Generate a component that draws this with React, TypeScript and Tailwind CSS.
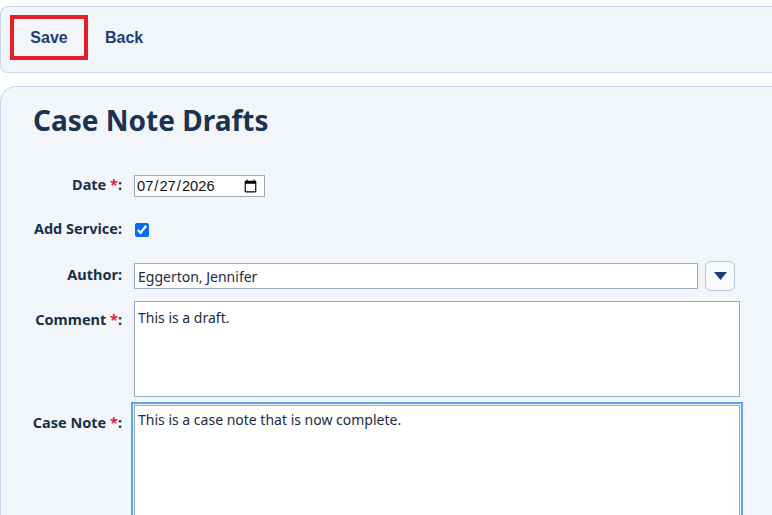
import { ChangeEvent, useState } from 'react';

const labelCls =
  "w-[121px] shrink-0 text-right text-[14.5px] font-bold text-[#1b2f4a]";
const fieldCls =
  "border border-[#98aac0] bg-white text-[14px] text-[#1d2b3c] outline-none font-['Noto_Sans',sans-serif]";

function Required() {
  return <span className="text-[#ea1c4f]"> *</span>;
}

function Caret() {
  return (
    <svg width="13" height="8" viewBox="0 0 13 8" aria-hidden="true">
      <path d="M0 0 H13 L6.5 8 Z" fill="#1f3d73" />
    </svg>
  );
}

export default function App() {
  const [date, setDate] = useState('2026-07-27');
  const [addService, setAddService] = useState(true);
  const [author, setAuthor] = useState('Eggerton, Jennifer');
  const [comment, setComment] = useState('This is a draft.');
  const [note, setNote] = useState('This is a case note that is now complete.');

  const onText =
    (set: (v: string) => void) =>
    (e: ChangeEvent<HTMLInputElement | HTMLTextAreaElement>) =>
      set(e.target.value);

  return (
    <div className="min-h-screen overflow-hidden bg-white pt-[6px] font-['Noto_Sans',sans-serif]">
      {/* Toolbar */}
      <div className="flex h-[67px] items-center gap-[18px] rounded-l-lg border border-r-0 border-[#c6d6ea] bg-[#f2f6fb] pb-[4px] pl-[9px]">
        <button className="h-[45px] w-[78px] border-4 border-[#e6202a] font-['Liberation_Sans',Arial,sans-serif] text-[16px] font-bold text-[#1f3d73]">
          Save
        </button>
        <button className="-ml-[1px] font-['Liberation_Sans',Arial,sans-serif] text-[16px] font-bold text-[#1f3d73]">
          Back
        </button>
      </div>

      {/* Form panel */}
      <div className="mt-[13px] min-h-[440px] rounded-tl-2xl border-l border-t border-[#c6d6ea] bg-[#f2f6fb] pl-[32px] pt-[15px]">
        <h1 className="text-[28px] leading-[36px] font-bold text-[#1b3350]">Case Note Drafts</h1>

        <div className="-ml-[32px] flex flex-col">
          {/* Date */}
          <div className="mt-[37px] flex h-[22px] items-center gap-[12px]">
            <label className={`${labelCls} -mt-[3px]`}>
              Date<Required />:
            </label>
            <input
              type="date"
              value={date}
              onChange={onText(setDate)}
              className="h-[22px] w-[131px] border border-[#98aac0] bg-white pl-[1px] pr-[4px] font-['Liberation_Sans',Arial,sans-serif] text-[14.7px] text-[#111] outline-none"
            />
          </div>

          {/* Add service */}
          <div className="mt-[22px] flex h-[22px] items-center gap-[12px]">
            <label className={`${labelCls} -mt-[2px]`}>Add Service:</label>
            <input
              type="checkbox"
              checked={addService}
              onChange={(e) => setAddService(e.target.checked)}
              className="ml-[1px] h-[14px] w-[14px] accent-[#0b6bf0]"
            />
          </div>

          {/* Author */}
          <div className="mt-[20px] flex h-[30px] items-center gap-[12px]">
            <label className={`${labelCls} -mt-[2px]`}>Author:</label>
            <input
              value={author}
              onChange={onText(setAuthor)}
              className={`${fieldCls} h-[26px] w-[564px] px-[3px]`}
            />
            <button className="-ml-[5px] flex h-[30px] w-[30px] items-center justify-center rounded-md border border-[#b7cae0] bg-[#f8fafd]">
              <Caret />
            </button>
          </div>

          {/* Comment */}
          <div className="mt-[10px] flex items-start gap-[12px]">
            <label className={`${labelCls} pt-[8px] leading-[20px]`}>
              Comment<Required />:
            </label>
            <textarea
              value={comment}
              onChange={onText(setComment)}
              className={`${fieldCls} h-[96px] w-[606px] resize-none px-[3px] py-[5px]`}
            />
          </div>

          {/* Case note */}
          <div className="mt-[8px] flex items-start gap-[12px]">
            <label className={`${labelCls} pt-[7px] leading-[20px]`}>
              Case Note<Required />:
            </label>
            <textarea
              value={note}
              onChange={onText(setNote)}
              className={`${fieldCls} h-[140px] w-[606px] resize-none px-[3px] py-[3px] outline-2 outline-offset-1 outline-solid outline-[#5ea4ea]`}
            />
          </div>
        </div>
      </div>
    </div>
  );
}
